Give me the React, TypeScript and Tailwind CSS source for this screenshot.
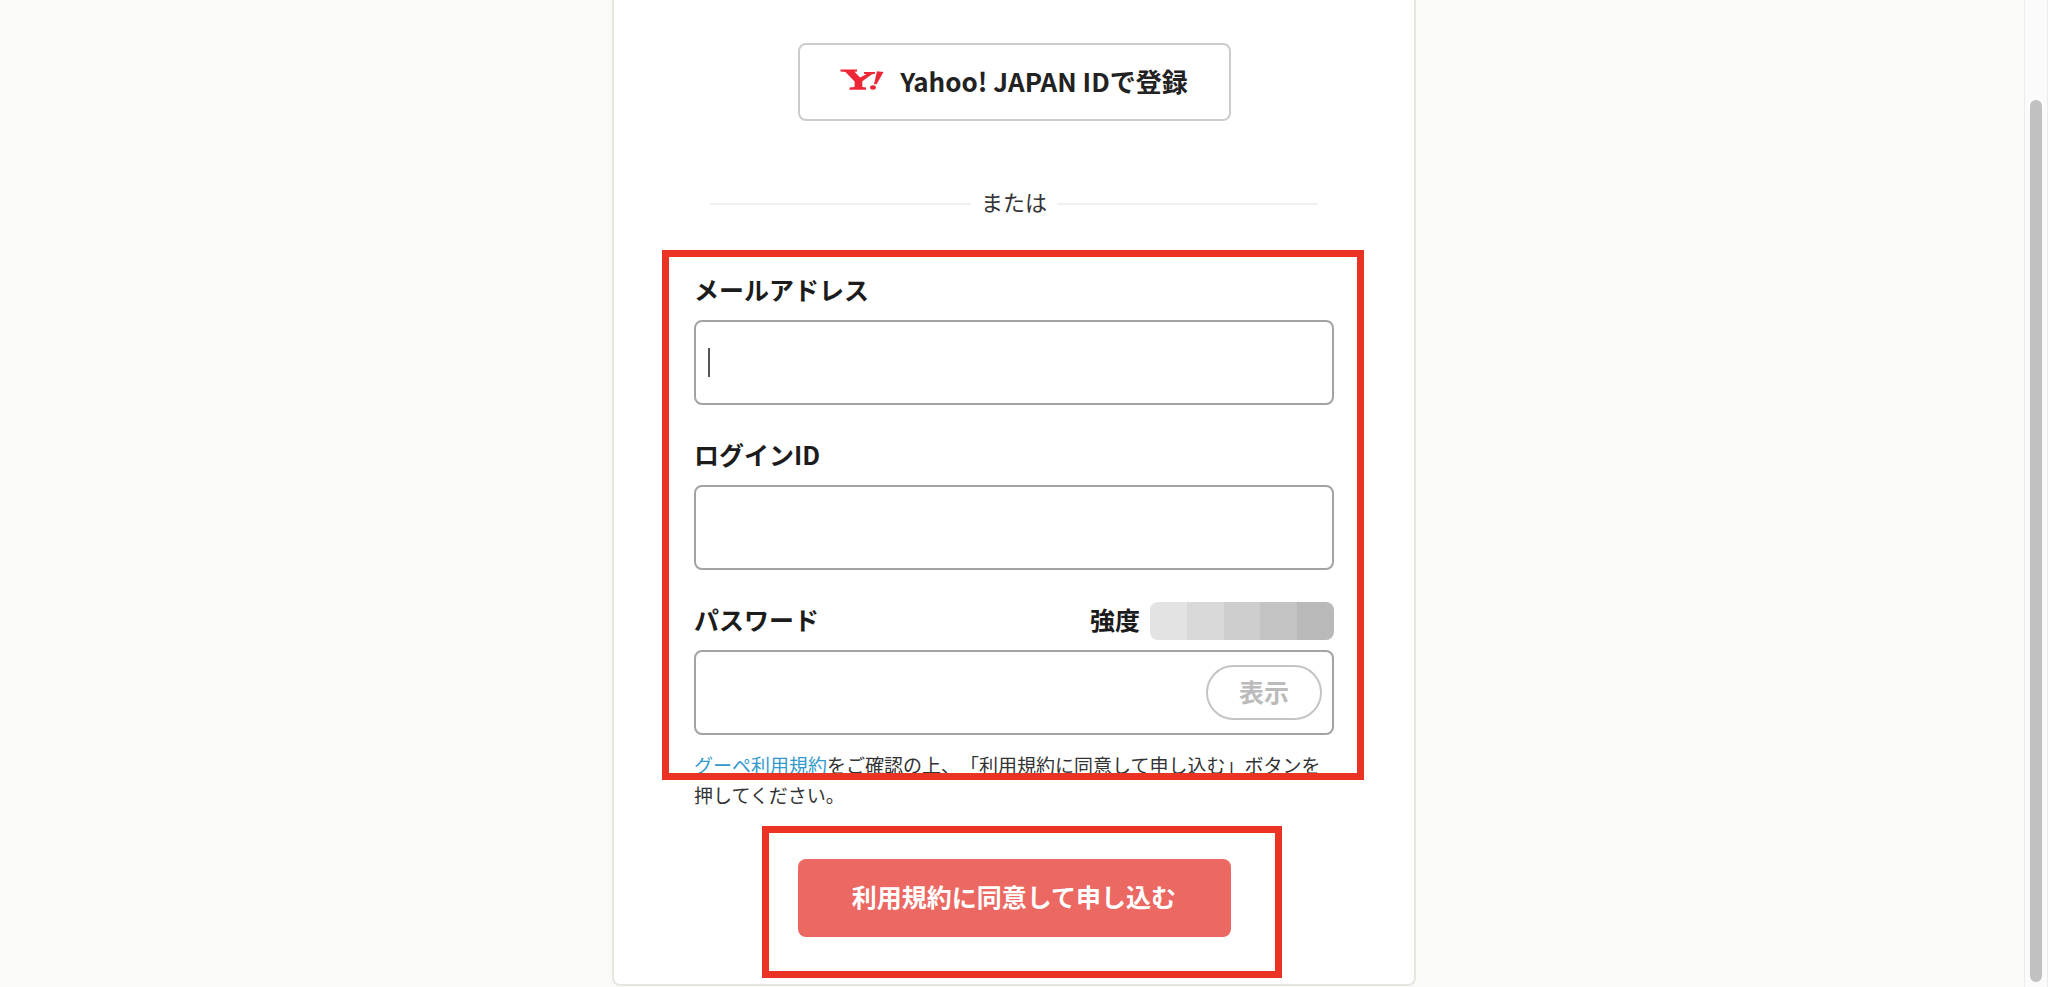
import React, { useState } from 'react';

const STRENGTH_COLORS = ['bg-[#e3e3e3]', 'bg-[#d9d9d9]', 'bg-[#cecece]', 'bg-[#c3c3c3]', 'bg-[#b9b9b9]'];

const inputClass =
  'block w-full h-[85px] rounded-lg border-2 border-[#a3a3a3] bg-white px-3 text-2xl text-[#222] outline-none';
const labelClass = 'block text-[25px] leading-[34px] font-bold text-[#1c1c1c]';

const YahooLogo: React.FC = () => (
  <svg className="h-[22px] w-11" viewBox="0 0 44 22" fill="#ee2737" aria-hidden="true">
    <path d="M0.5 0.5H17V2.5L14.5 2.8L20 8.6L26.5 5.2L24 4.8V3H35V4.8L32 5.3L22.3 12.2V18L26 18.6V20.8H9.5V18.6L14.6 18V12.6L5.5 3L0.5 2.5Z" />
    <path d="M37 2.2L43.5 3L36.6 15.2H34Z" />
    <ellipse cx="33" cy="18.5" rx="2.9" ry="2.2" />
  </svg>
);

const Divider: React.FC<{ text: string }> = ({ text }) => (
  <div className="mt-[67px] px-4 flex items-center gap-2.5">
    <span className="h-0.5 flex-1 bg-[#f0f0ec]" />
    <span className="pb-1.5 text-[22px] leading-[26px] text-[#333]">{text}</span>
    <span className="h-0.5 flex-1 bg-[#f0f0ec]" />
  </div>
);

const App: React.FC = () => {
  const [email, setEmail] = useState('');
  const [loginId, setLoginId] = useState('');
  const [password, setPassword] = useState('');
  const [visible, setVisible] = useState(false);

  return (
    <div
      lang="ja"
      className="min-h-screen flex bg-[#fafaf8] font-['Noto_Sans_CJK_JP',sans-serif] [text-spacing-trim:space-all]"
    >
      <main className="flex-1 flex justify-center items-start pl-1">
        <form
          onSubmit={(e) => e.preventDefault()}
          className="w-full max-w-[804px] rounded-b-lg border-2 border-t-0 border-[#e6e6de] bg-white px-20 pt-[43px] pb-[47px]"
        >
          <button
            type="button"
            className="mx-auto flex h-[78px] w-full max-w-[433px] items-center justify-center gap-4 rounded-lg border-2 border-[#ccc] bg-white pb-1 text-[26px] font-bold text-[#222]"
          >
            <YahooLogo />
            Yahoo! JAPAN IDで登録
          </button>

          <Divider text="または" />

          {/* Fields */}
          <div className="relative mt-[52px] flex flex-col gap-8">
            <div>
              <label htmlFor="email" className={labelClass}>メールアドレス</label>
              <div className="relative mt-3.5">
                <input
                  id="email"
                  type="email"
                  value={email}
                  onChange={(e) => setEmail(e.target.value)}
                  className={inputClass}
                />
                {!email && <span className="absolute left-3.5 top-7 h-[29px] w-0.5 bg-[#555]" />}
              </div>
            </div>

            <div>
              <label htmlFor="login-id" className={labelClass}>ログインID</label>
              <div className="mt-3.5">
                <input
                  id="login-id"
                  type="text"
                  value={loginId}
                  onChange={(e) => setLoginId(e.target.value)}
                  className={inputClass}
                />
              </div>
            </div>

            <div>
              <div className="flex items-start justify-between">
                <label htmlFor="password" className={labelClass}>パスワード</label>
                <div className="flex items-start gap-2.5">
                  <span className={labelClass}>強度</span>
                  <div className="flex h-[38px] w-[184px] overflow-hidden rounded-lg">
                    {STRENGTH_COLORS.map((color) => (
                      <span key={color} className={`flex-1 ${color}`} />
                    ))}
                  </div>
                </div>
              </div>
              <div className="relative mt-2.5">
                <input
                  id="password"
                  type={visible ? 'text' : 'password'}
                  value={password}
                  onChange={(e) => setPassword(e.target.value)}
                  className={inputClass}
                />
                <button
                  type="button"
                  onClick={() => setVisible(!visible)}
                  className="absolute right-3 top-[15px] h-[55px] w-[116px] rounded-full border-2 border-[#c4c4c4] bg-white pb-0.5 text-[25px] leading-none font-bold text-[#bbb]"
                >
                  表示
                </button>
              </div>
            </div>
            <div className="pointer-events-none absolute -top-[22px] -left-8 -right-[30px] -bottom-[45px] border-[7px] border-[#ea3323]" />
          </div>

          <p className="mt-[15px] text-[19px] leading-[30px] text-[#333]">
            <a href="#terms" className="text-[#3399cc]">グーペ利用規約</a>
            をご確認の上、「利用規約に同意して申し込む」ボタンを押してください。
          </p>

          <div className="relative mx-auto mt-[49px] w-full max-w-[433px]">
            <button
              type="submit"
              className="h-[78px] w-full rounded-lg bg-[#ec6863] pb-0.5 text-[25px] font-bold text-white"
            >
              利用規約に同意して申し込む
            </button>
            <div className="pointer-events-none absolute -top-[33px] -left-9 -right-[51px] -bottom-[41px] border-[7px] border-[#ea3323]" />
          </div>
        </form>
      </main>

      {/* Scrollbar */}
      <div className="flex w-6 flex-col items-center border-x border-[#ececec] bg-[#fbfbfb] pt-[100px] pb-[5px]">
        <span className="w-3 flex-1 rounded-full bg-[#c1c1c1]" />
      </div>
    </div>
  );
};

export default App;
